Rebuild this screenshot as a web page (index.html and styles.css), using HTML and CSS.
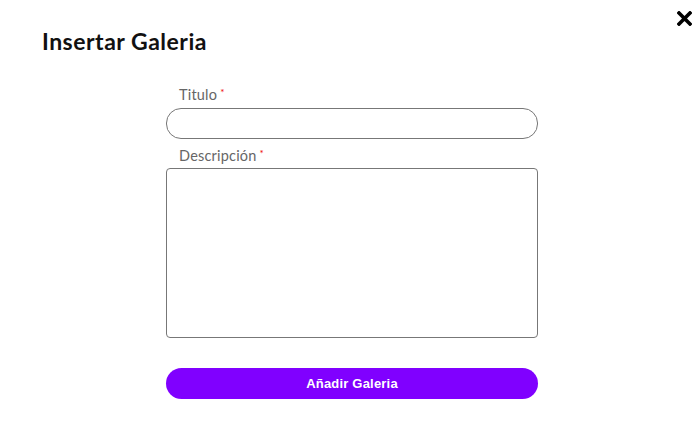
FILE: index.html
```html
<!DOCTYPE html>
<html lang="es">
<head>
<meta charset="utf-8">
<link rel="stylesheet" href="styles.css">
</head>
<body>
<div class="modal">
  <button class="close" aria-label="Cerrar">
    <svg width="15" height="15" viewBox="0 0 15 15"><path d="M2 2 L13 13 M13 2 L2 13" stroke="#000" stroke-width="3.6" stroke-linecap="square"/></svg>
  </button>
  <h1 class="title">Insertar Galeria</h1>
  <form class="form">
    <label class="label">Titulo<span class="req">*</span></label>
    <input class="input" type="text">
    <label class="label">Descripción<span class="req">*</span></label>
    <textarea class="textarea"></textarea>
    <button type="button" class="submit">Añadir Galeria</button>
  </form>
</div>
</body>
</html>
```
FILE: styles.css
```css
html, body { margin: 0; padding: 0; background: #fff; }
.modal { position: relative; width: 698px; height: 435px; box-sizing: border-box; padding: 28px 0 0 42px; }
.close { position: absolute; top: 11px; right: 6px; background: none; border: 0; padding: 0; width: 15px; height: 15px; cursor: pointer; }
.close svg { display: block; }
.title { margin: 0; font-family: Lato, "Open Sans", sans-serif; font-weight: 700; font-size: 23px; line-height: 26px; color: #111; letter-spacing: 0.5px; }
.form { display: flex; flex-direction: column; width: 372px; margin: 32px 0 0 124px; }
.label { font-family: Lato, "Open Sans", sans-serif; font-size: 14.5px; line-height: 18px; color: #666; padding-left: 13px; margin-bottom: 4px; letter-spacing: 0.2px; }
.label + .textarea { margin-top: -1px; }
.req { color: #e00; font-size: 10px; vertical-align: top; margin-left: 3px; line-height: 12px; }
.input { box-sizing: border-box; height: 31px; border: 1px solid #777; border-radius: 15px; margin: 0 0 8px; padding: 0 12px; outline: none; }
.textarea { box-sizing: border-box; height: 170px; border: 1px solid #777; border-radius: 4px; resize: none; outline: none; }
.submit { margin-top: 30px; height: 31px; border: 0; border-radius: 16px; background: #8000ff; color: #fff; font-family: "Liberation Sans", Arial, sans-serif; font-weight: 700; font-size: 13px; letter-spacing: 0.2px; cursor: pointer; }
```
